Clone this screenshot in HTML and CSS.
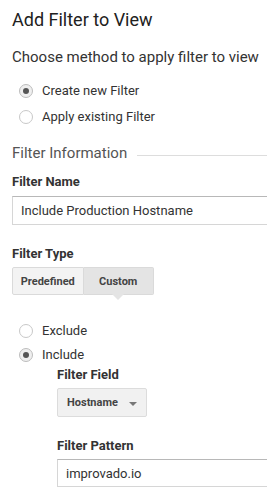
FILE: index.html
```html
<!doctype html>
<html lang="en">
<head>
	<meta charset="UTF-8">
	<title>Add Filter to View</title>
	<link rel="stylesheet" href="styles.css">
</head>
<body>
	<h1 class="title">Add Filter to View</h1>
	<p class="subtitle">Choose method to apply filter to view</p>

	<div class="radios method">
		<label class="radio"><span class="dot checked"></span>Create new Filter</label>
		<label class="radio"><span class="dot"></span>Apply existing Filter</label>
	</div>

	<div class="section">
		<span class="section-name">Filter Information</span>
		<span class="section-line"></span>
	</div>

	<div class="label first">Filter Name</div>
	<input class="field" type="text" value="Include Production Hostname">

	<div class="label">Filter Type</div>
	<div class="tabs">
		<span class="tab">Predefined</span>
		<span class="tab active">Custom</span>
	</div>

	<div class="radios kind">
		<label class="radio"><span class="dot"></span>Exclude</label>
		<label class="radio"><span class="dot checked"></span>Include</label>
	</div>

	<div class="sub">
		<div class="label tight">Filter Field</div>
		<div class="select">Hostname<span class="caret"></span></div>

		<div class="label">Filter Pattern</div>
		<input class="field" type="text" value="improvado.io">
	</div>
</body>
</html>
```

FILE: styles.css
```css
html, body {
	overflow: hidden;
}
body {
	margin: 0;
	padding: 8px 0 0 12px;
	font-family: Roboto, "Liberation Sans", Arial, sans-serif;
	color: #333;
	background: #fff;
}
.title {
	margin: 0;
	font-size: 18px;
	line-height: 24px;
	font-weight: 400;
	color: #212121;
}
.subtitle {
	margin: 15px 0 0;
	font-size: 15px;
	line-height: 20px;
	white-space: nowrap;
	color: #333;
}
.radios {
	display: flex;
	flex-direction: column;
}
.method {
	margin-top: 11px;
}
.radio {
	display: flex;
	align-items: center;
	height: 26px;
	padding-left: 7px;
	font-size: 13px;
	line-height: 16px;
	color: #333;
}
.kind {
	margin-top: 24px;
}
.kind .radio {
	height: 24px;
}
.dot {
	box-sizing: border-box;
	width: 14px;
	height: 14px;
	margin-right: 9px;
	border: 1px solid #c8c8c8;
	border-radius: 50%;
	background: #fff;
	display: flex;
	align-items: center;
	justify-content: center;
}
.dot.checked {
	background: #efefef;
	border-color: #bdbdbd;
}
.dot.checked::after {
	content: "";
	width: 6px;
	height: 6px;
	border-radius: 50%;
	background: #555;
}
.section {
	display: flex;
	align-items: center;
	margin-top: 13px;
}
.section-name {
	font-size: 15px;
	line-height: 20px;
	color: #555;
}
.section-line {
	flex: 1;
	height: 1px;
	margin: 4px 0 0 10px;
	background: #ddd;
}
.label {
	margin-top: 21px;
	font-size: 13px;
	line-height: 16px;
	font-weight: 700;
	color: #333;
}
.label.first {
	margin-top: 11px;
}
.label.tight {
	margin-top: 0;
}
.field {
	display: block;
	box-sizing: border-box;
	width: 100%;
	height: 29px;
	margin: 6px 0 0;
	padding: 0 8px;
	border: 1px solid #d6d6d6;
	border-top-color: #b8b8b8;
	border-right: 0;
	border-radius: 0;
	font-family: inherit;
	font-size: 13px;
	color: #333;
	background: #fff;
	outline: none;
}
.sub .field {
	margin-top: 5px;
	height: 28px;
}
.tabs {
	display: flex;
	margin-top: 5px;
	width: 142px;
}
.tab {
	box-sizing: border-box;
	flex: 1;
	height: 28px;
	display: flex;
	align-items: center;
	justify-content: center;
	border: 1px solid #dadada;
	background: #f3f3f3;
	font-size: 11px;
	font-weight: 700;
	color: #444;
}
.tab:first-child {
	border-radius: 2px 0 0 2px;
}
.tab.active {
	border-left: none;
	background: #e4e4e4;
	border-radius: 0 2px 2px 0;
	position: relative;
}
.tab.active::after {
	content: "";
	position: absolute;
	left: 50%;
	top: 100%;
	margin-left: -6px;
	border-left: 6px solid transparent;
	border-right: 6px solid transparent;
	border-top: 6px solid #e4e4e4;
}
.sub {
	padding-left: 45px;
}
.select {
	box-sizing: border-box;
	width: 90px;
	height: 29px;
	margin-top: 5px;
	padding: 0 9px;
	display: flex;
	align-items: center;
	justify-content: space-between;
	border: 1px solid #dcdcdc;
	border-radius: 2px;
	background: #f1f1f1;
	font-size: 11px;
	font-weight: 700;
	color: #444;
}
.caret {
	width: 0;
	height: 0;
	margin-top: 2px;
	border-left: 4px solid transparent;
	border-right: 4px solid transparent;
	border-top: 4px solid #777;
}
```
